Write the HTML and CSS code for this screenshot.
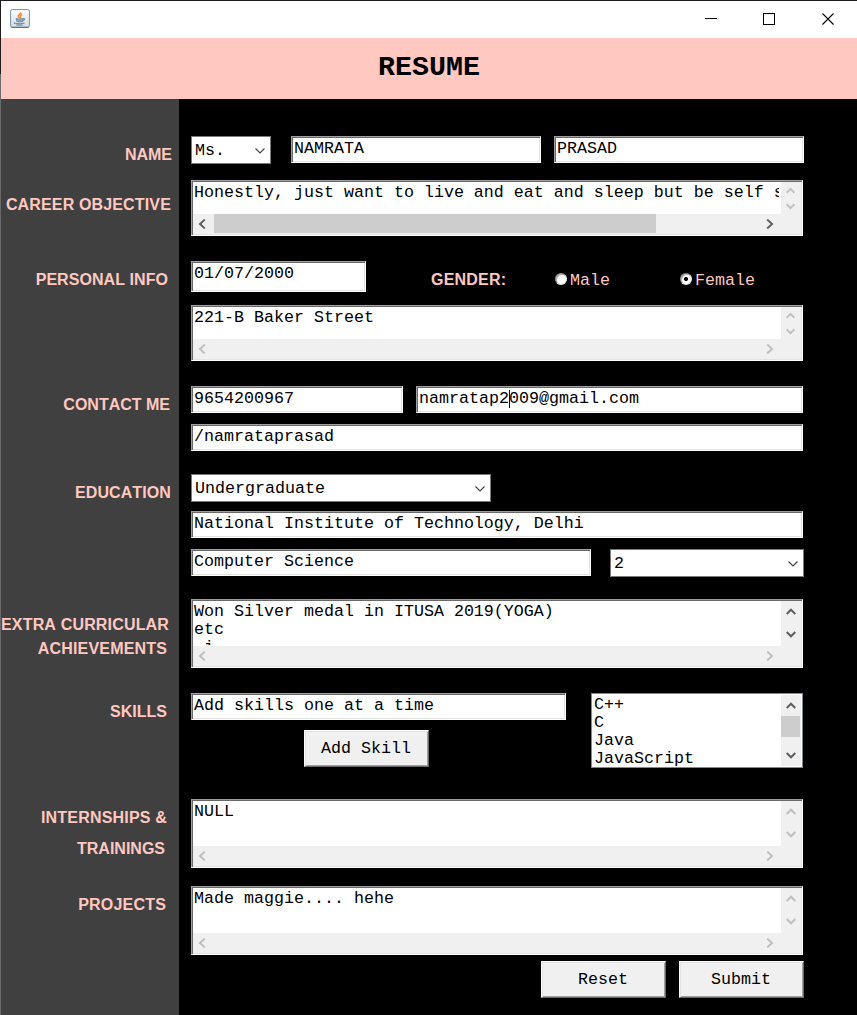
FILE: index.html
```html
<!DOCTYPE html>
<html lang="en">
<head>
<meta charset="utf-8">
<title>Resume</title>
<link rel="stylesheet" href="styles.css">
</head>
<body>
<svg class="defs" width="0" height="0" aria-hidden="true">
  <symbol id="left" viewBox="0 0 8 10"><path d="M6.800 .6 2 5 6.800 9.4"/></symbol>
  <symbol id="right" viewBox="0 0 8 10"><path d="M1.200 .6 6 5 1.200 9.4"/></symbol>
  <symbol id="up" viewBox="0 0 10 7"><path d="M.7 6 5 1.7 9.3 6"/></symbol>
  <symbol id="down" viewBox="0 0 10 7"><path d="M.7 1 5 5.3 9.3 1"/></symbol>
  <symbol id="drop" viewBox="0 0 10 6"><path d="M.5 .5 5 5 9.5 .5"/></symbol>
</svg>
<div class="window">
  <header class="titlebar">
    <svg class="java" viewBox="0 0 20 19">
      <defs><linearGradient id="tile" x2="0" y2="1"><stop stop-color="#fff"/><stop offset="1" stop-color="#d3dbe1"/></linearGradient></defs>
      <rect x=".6" y=".6" width="18.8" height="17.8" rx="1.6" fill="url(#tile)" stroke="#7890a1"/>
      <path d="M1.5 18.3h17" stroke="#4c687d"/>
      <path d="M10.8 3.2c.8 1.7-3.3 2.6-2.6 4.200.3.8 1.2 1.2 1.2 1.9M12 5.500c-2 1-2.100 1.600-1.400 2.600.4.600 0 1.100-.4 1.500" fill="none" stroke="#ee8a32" stroke-width="1.400"/>
      <path d="M6 9.500q4 1.300 7.300 0l-.8 3.100q-2.800.8-5.600 0z" fill="#8da9be" stroke="#5d809b" stroke-width=".8"/>
      <path d="M13 10q2.500-.7 1.600.9-.7 1-2 1M4.700 13.400q-1.600.8.7 1.200 5.500.7 9.200-.6M6.500 16h6" fill="none" stroke="#5d809b"/>
    </svg>
    <svg class="controls" viewBox="0 0 130 14">
      <path d="M0 5.500h12M58.500 .5h11v11h-11z" fill="none" stroke="#000" shape-rendering="crispEdges"/>
      <path d="m117.500 .5 11 11m0-11-11 11" fill="none" stroke="#000" stroke-width="1.100"/>
    </svg>
  </header>
  <h1 class="banner">RESUME</h1>
  <main class="content">
    <aside class="sidebar">
      <div class="label l-name">NAME</div>
      <div class="label l-career">CAREER OBJECTIVE</div>
      <div class="label l-personal">PERSONAL INFO</div>
      <div class="label l-contact">CONTACT ME</div>
      <div class="label l-education">EDUCATION</div>
      <div class="label l-extra">EXTRA CURRICULAR</div>
      <div class="label l-achieve">ACHIEVEMENTS</div>
      <div class="label l-skills">SKILLS</div>
      <div class="label l-intern">INTERNSHIPS &amp;</div>
      <div class="label l-train">TRAININGS</div>
      <div class="label l-projects">PROJECTS</div>
    </aside>
    <form class="form">
      <div class="row name-row">
        <div class="select title-select"><span>Ms.</span><svg class="drop"><use href="#drop"/></svg></div>
        <div class="field first-name">NAMRATA</div>
        <div class="field last-name">PRASAD</div>
      </div>

      <div class="area short career">
        <div class="text">Honestly, just want to live and eat and sleep but be self s</div>
        <div class="vbar off"><svg class="v"><use href="#up"/></svg><svg class="v"><use href="#down"/></svg></div>
        <div class="hbar"><svg class="h"><use href="#left"/></svg><i class="hthumb"></i><svg class="h"><use href="#right"/></svg></div>
      </div>

      <div class="row birth-row">
        <div class="field birth">01/07/2000</div>
        <div class="gender">GENDER:</div>
        <div class="option male"><i class="radio"></i><span>Male</span></div>
        <div class="option female"><i class="radio checked"></i><span>Female</span></div>
      </div>

      <div class="area short address">
        <div class="text">221-B Baker Street</div>
        <div class="vbar off"><svg class="v"><use href="#up"/></svg><svg class="v"><use href="#down"/></svg></div>
        <div class="hbar off"><svg class="h"><use href="#left"/></svg><svg class="h"><use href="#right"/></svg></div>
      </div>

      <div class="row contact-row">
        <div class="field phone">9654200967</div>
        <div class="field email">namratap2<i class="caret"></i>009@gmail.com</div>
      </div>
      <div class="field handle">/namrataprasad</div>

      <div class="select degree"><span>Undergraduate</span><svg class="drop"><use href="#drop"/></svg></div>
      <div class="field institute">National Institute of Technology, Delhi</div>
      <div class="row course-row">
        <div class="field course">Computer Science</div>
        <div class="select year"><span>2</span><svg class="drop"><use href="#drop"/></svg></div>
      </div>

      <div class="area tall extra">
        <div class="text">Won Silver medal in ITUSA 2019(YOGA)<br>etc<br> i</div>
        <div class="vbar"><svg class="v"><use href="#up"/></svg><svg class="v"><use href="#down"/></svg></div>
        <div class="hbar off"><svg class="h"><use href="#left"/></svg><svg class="h"><use href="#right"/></svg></div>
      </div>

      <div class="row skills-row">
        <div class="skill-entry">
          <div class="field">Add skills one at a time</div>
          <div class="button">Add Skill</div>
        </div>
        <div class="list">
          <div class="items"><div>C++</div><div>C</div><div>Java</div><div>JavaScript</div></div>
          <div class="listbar"><svg class="v"><use href="#up"/></svg><i class="vthumb"></i><svg class="v"><use href="#down"/></svg></div>
        </div>
      </div>

      <div class="area tall internships">
        <div class="text">NULL</div>
        <div class="vbar off"><svg class="v"><use href="#up"/></svg><svg class="v"><use href="#down"/></svg></div>
        <div class="hbar off"><svg class="h"><use href="#left"/></svg><svg class="h"><use href="#right"/></svg></div>
      </div>
      <div class="area tall projects">
        <div class="text">Made maggie.... hehe</div>
        <div class="vbar off"><svg class="v"><use href="#up"/></svg><svg class="v"><use href="#down"/></svg></div>
        <div class="hbar off"><svg class="h"><use href="#left"/></svg><svg class="h"><use href="#right"/></svg></div>
      </div>

      <div class="row actions">
        <div class="button">Reset</div>
        <div class="button">Submit</div>
      </div>
    </form>
  </main>
</div>
</body>
</html>
```
FILE: styles.css
```css
* { box-sizing: border-box; }
body {
  margin: 0;
  font: 16.667px/18px "Liberation Mono", monospace;
  color: #000;
  overflow: hidden;
}
svg { display: block; flex: none; }
.defs { position: absolute; }

.window {
  display: flex;
  flex-direction: column;
  width: 857px;
  height: 1015px;
  padding: 1px 0 0 1px;
  background: linear-gradient(#1e1e1e 74px, #6a6a6a 74px);
}
.titlebar {
  display: flex;
  justify-content: space-between;
  height: 37px;
  padding: 8px 22px 0 9px;
  background: #fff;
}
.java { width: 20px; height: 19px; }
.controls { width: 130px; height: 14px; margin-top: 4px; }
.banner {
  margin: 0;
  height: 61px;
  background: #ffc8c0;
  font: bold 28.3px/58px "Liberation Mono", monospace;
  text-align: center;
}
.content { display: flex; flex: 1; }

.sidebar { width: 178px; background: #404040; }
.label, .gender {
  font: bold 16px/20px "Liberation Sans", Arial, sans-serif;
  font-kerning: none;
  color: #ffc8c0;
  white-space: nowrap;
}
.label { text-align: right; }
.l-name { margin-top: 46px; padding-right: 7px; }
.l-career { margin-top: 30px; padding-right: 8px; letter-spacing: .15px; }
.l-personal { margin-top: 55px; padding-right: 11px; letter-spacing: .06px; }
.l-contact { margin-top: 105px; padding-right: 9px; }
.l-education { margin-top: 68px; padding-right: 8px; letter-spacing: .1px; }
.l-extra { margin-top: 112px; padding-right: 10px; letter-spacing: .17px; }
.l-achieve { margin-top: 4px; padding-right: 12px; letter-spacing: .17px; }
.l-skills { margin-top: 43px; padding-right: 12px; }
.l-intern { margin-top: 86px; padding-right: 12px; letter-spacing: .19px; }
.l-train { margin-top: 11px; padding-right: 14px; }
.l-projects { margin-top: 36px; padding-right: 13px; letter-spacing: .2px; }

.form {
  flex: 1;
  padding: 37px 0 0 12px;
  background: #000;
}
.row { display: flex; align-items: flex-start; }

.field, .area {
  background: #fff;
  border: 1px solid;
  border-color: #a0a0a0 #fff #fff #a0a0a0;
  box-shadow: inset 1px 1px #696969, inset -1px -1px #e3e3e3;
  white-space: pre;
}
.field { height: 27px; padding: 3px 2px 0; }
.select {
  display: flex;
  align-items: center;
  justify-content: space-between;
  height: 28px;
  padding: 2px 5px 0 3px;
  background: #fff;
  border: 1px solid #7a7a7a;
}
.drop { width: 10px; height: 6px; fill: none; stroke: #404040; stroke-width: 1.1; }

.name-row { height: 28px; }
.title-select { width: 80px; margin-right: 20px; }
.first-name { width: 250px; margin-right: 13px; }
.last-name { width: 250px; }

.area {
  display: grid;
  grid-template-columns: 588px 20px;
  width: 612px;
  padding: 1px;
}
.short { height: 56px; grid-template-rows: 32px 20px; }
.tall { height: 69px; grid-template-rows: 45px 20px; }
.text { padding: 2px 0 0 1px; margin-right: 2px; overflow: hidden; }
.vbar, .hbar, .listbar {
  display: flex;
  align-items: center;
  justify-content: space-between;
  background: #f0f0f0;
}
.vbar { flex-direction: column; padding-right: 1px; }
.short .vbar { padding-top: 5px; padding-bottom: 4px; }
.tall .vbar { padding-top: 7px; padding-bottom: 8px; }
.hbar { grid-column: 1 / 3; padding: 0 27px 1px 5px; }
.v { width: 10px; height: 7px; }
.short .v { width: 9px; height: 7px; }
.h { width: 8px; height: 10px; }
.v, .h { fill: none; stroke: #606060; stroke-width: 2; }
.off svg { stroke: #bfbfbf; }
.hthumb { width: 442px; height: 19px; margin-right: 102px; background: #cdcdcd; }

.career { margin-top: 16px; }
.birth-row { margin-top: 25px; }
.birth { width: 175px; height: 31px; }
.gender {
  width: 124px;
  margin: 9px 0 0 65px;
  letter-spacing: .2px;
}
.option { display: flex; width: 125px; padding-top: 10px; color: #ffc8c0; }
.option span { padding-top: 1px; }
.radio {
  width: 12px;
  height: 12px;
  margin: 2px 3px 0 0;
  border: 1px solid;
  border-color: #8d8d8d #e3e3e3 #e3e3e3 #8d8d8d;
  border-radius: 50%;
  background: #fff;
  box-shadow: inset 1px 1px #aaa;
}
.checked { background: radial-gradient(circle, #000 1.6px, #fff 2.4px); }
.address { margin-top: 13px; }

.contact-row { margin-top: 25px; }
.phone { width: 212px; margin-right: 13px; }
.email { width: 387px; }
.caret {
  display: inline-block;
  width: 1px;
  height: 18px;
  margin-right: -1px;
  background: #000;
  vertical-align: top;
}
.handle { width: 612px; margin-top: 11px; }

.degree { width: 300px; margin-top: 23px; }
.institute { width: 612px; margin-top: 9px; }
.course-row { margin-top: 11px; }
.course { width: 400px; margin-right: 19px; }
.year { width: 194px; }

.extra { margin-top: 22px; }
.extra .text { margin-bottom: 1px; }
.skills-row { margin-top: 25px; }
.skill-entry { width: 375px; margin-right: 25px; }
.button {
  width: 125px;
  height: 37px;
  padding-right: 1px;
  border: 1px solid;
  border-color: #fff #696969 #696969 #fff;
  box-shadow: inset 1px 1px #e3e3e3, inset -1px -1px #a0a0a0;
  background: #f0f0f0;
  line-height: 35px;
  text-align: center;
}
.skill-entry .button { margin: 10px 0 0 113px; }
.list {
  display: flex;
  justify-content: space-between;
  width: 212px;
  height: 75px;
  padding: 1px;
  background: #fff;
  border: 1px solid #828790;
}
.items { padding: 1px 0 0 1px; }
.listbar { flex-direction: column; width: 20px; padding: 7px 0; }
.listbar .v { margin-right: 1px; }
.vthumb { width: 19px; height: 21px; margin: 0 1px 8px 0; background: #cdcdcd; }

.internships { margin-top: 31px; }
.projects { margin-top: 18px; }
.actions { gap: 13px; margin: 6px 0 0 350px; }
```
